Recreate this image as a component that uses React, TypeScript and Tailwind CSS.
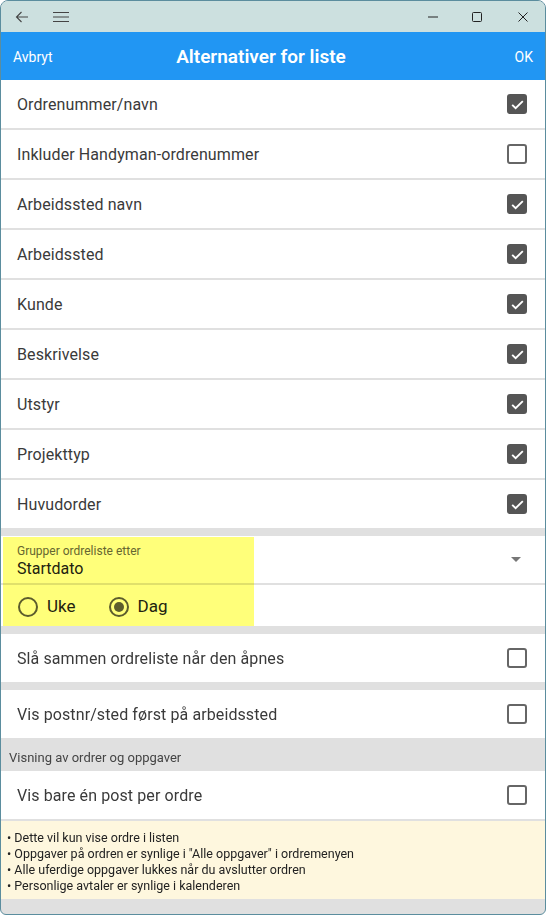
import React from "react";

const rows = [
  { label: "Ordrenummer/navn", on: true },
  { label: "Inkluder Handyman-ordrenummer", on: false },
  { label: "Arbeidssted navn", on: true },
  { label: "Arbeidssted", on: true },
  { label: "Kunde", on: true },
  { label: "Beskrivelse", on: true },
  { label: "Utstyr", on: true },
  { label: "Projekttyp", on: true },
  { label: "Huvudorder", on: true },
];

function Check({ on }: { on: boolean }) {
  if (on)
    return (
      <div className="w-[20px] h-[20px] rounded-[3px] bg-[#555555] flex items-center justify-center">
        <svg width="15" height="15" viewBox="0 0 24 24" fill="none">
          <path d="M3.5 12.5l5.5 5.5L20.5 6.5" stroke="white" strokeWidth="3" />
        </svg>
      </div>
    );
  return <div className="w-[20px] h-[20px] rounded-[3px] border-2 border-[#666666]" />;
}

function Row({ label, on, last }: { label: string; on: boolean; last?: boolean }) {
  return (
    <div
      className={
        "h-[48px] flex items-center justify-between pl-4 pr-[18px] bg-white " +
        (last ? "" : "border-b-2 border-[#e0e0e0] h-[50px]")
      }
    >
      <span className="text-[16px] text-[#3a3a3a] pt-[2px] tracking-[0.1px]">{label}</span>
      <Check on={on} />
    </div>
  );
}

function Radio({ on }: { on: boolean }) {
  return (
    <div className="w-[20px] h-[20px] rounded-full border-2 border-[#5c5c5c] flex items-center justify-center">
      {on && <div className="w-[10px] h-[10px] rounded-full bg-[#5c5c5c]" />}
    </div>
  );
}

export default function App() {
  return (
    <div
      className="w-[546px] h-[915px] border border-[#5b8d9e] rounded-t-[8px] rounded-b-[6px] overflow-hidden flex flex-col bg-[#e0e0e0]"
      style={{ fontFamily: "Roboto, 'Liberation Sans', sans-serif" }}
    >
      {/* title bar */}
      <div className="h-[31px] bg-[#cce0df] flex items-center text-[#333]">
        <svg className="ml-[14px]" width="14" height="12" viewBox="0 0 14 12" fill="none">
          <path d="M13 6H1.5M6.5 1L1.5 6l5 5" stroke="#444" strokeWidth="1.1" />
        </svg>
        <svg className="ml-[24px]" width="16" height="12" viewBox="0 0 16 12" fill="none">
          <path d="M0 1.5h16M0 6h16M0 10.5h16" stroke="#444" strokeWidth="1.1" />
        </svg>
        <div className="flex-1" />
        <svg width="12" height="12" viewBox="0 0 12 12" fill="none">
          <path d="M1 6h10" stroke="#222" strokeWidth="1" />
        </svg>
        <svg className="ml-[32px]" width="12" height="12" viewBox="0 0 12 12" fill="none">
          <rect x="1.5" y="1.5" width="9" height="9" rx="1" stroke="#222" strokeWidth="1" />
        </svg>
        <svg className="ml-[34px] mr-[16px]" width="12" height="12" viewBox="0 0 12 12" fill="none">
          <path d="M1.5 1.5l9 9M10.5 1.5l-9 9" stroke="#222" strokeWidth="1" />
        </svg>
      </div>

      {/* header */}
      <div className="h-[48px] bg-[#2196f3] flex items-center px-3 text-white pt-[2px]">
        <span className="text-[14px] w-[48px]">Avbryt</span>
        <span className="flex-1 text-center text-[19px] font-semibold">Alternativer for liste</span>
        <span className="text-[14px] w-[72px] text-right">OK</span>
      </div>

      {rows.map((r, i) => (
        <Row key={r.label} label={r.label} on={r.on} last={i === rows.length - 1} />
      ))}

      {/* group section */}
      <div className="mt-2 bg-white relative">
        <div className="h-[49px] flex items-center justify-between pl-4 pr-[23px] border-b-2 border-[#e0e0e0]">
          <div className="flex flex-col pt-[3px]">
            <span className="text-[12px] leading-[14px] text-[#666]">Grupper ordreliste etter</span>
            <span className="text-[16px] leading-[21px] text-[#222]">Startdato</span>
          </div>
          <svg width="12" height="7" viewBox="0 0 12 7">
            <path d="M1 1h10L6 6z" fill="#777" />
          </svg>
        </div>
        <div className="h-[41px] flex items-center pl-[17px] gap-[9px] text-[17px] text-[#222] pt-[2px]">
          <Radio on={false} />
          <span className="mr-[24px]">Uke</span>
          <Radio on />
          <span>Dag</span>
        </div>
        <div className="absolute left-[2px] top-[1px] w-[251px] h-[89px] bg-[#ffff7a] mix-blend-multiply" />
      </div>

      <div className="mt-2">
        <Row label="Slå sammen ordreliste når den åpnes" on={false} last />
      </div>
      <div className="mt-2">
        <Row label="Vis postnr/sted først på arbeidssted" on={false} last />
      </div>

      <div className="h-[33px] flex items-center px-2 pt-[7px] text-[13px] text-[#444]">
        Visning av ordrer og oppgaver
      </div>
      <Row label="Vis bare én post per ordre" on={false} />

      <div className="bg-[#fef7de] pl-[6px] pt-[9px] h-[78px] text-[12.5px] leading-[16px] text-[#222]">
        <div>• Dette vil kun vise ordre i listen</div>
        <div>• Oppgaver på ordren er synlige i "Alle oppgaver" i ordremenyen</div>
        <div>• Alle uferdige oppgaver lukkes når du avslutter ordren</div>
        <div>• Personlige avtaler er synlige i kalenderen</div>
      </div>
      <div className="flex-1" />
    </div>
  );
}
